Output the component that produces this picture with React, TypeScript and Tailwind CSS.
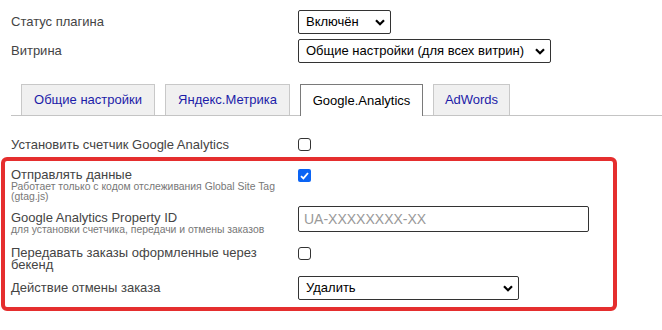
import React from "react";

const Chevron = () => (
  <svg width="10" height="7" viewBox="0 0 10 7" className="shrink-0">
    <path d="M1 1.2 L5 5.2 L9 1.2" fill="none" stroke="#000" strokeWidth="2.2" />
  </svg>
);

const Select = ({ value, w }: { value: string; w: string }) => (
  <div
    className={`flex h-[24px] items-center justify-between whitespace-nowrap rounded-[2px] border border-[#333] bg-white pl-[7px] pr-[5px] text-[13px] text-black ${w}`}
  >
    <span>{value}</span>
    <Chevron />
  </div>
);

const Checkbox = ({ checked }: { checked?: boolean }) =>
  checked ? (
    <div className="flex h-[13px] w-[13px] items-center justify-center rounded-[2px] bg-[#0b64f4]">
      <svg width="9" height="8" viewBox="0 0 9 8">
        <path d="M1 4.2 L3.4 6.4 L8 1" fill="none" stroke="#fff" strokeWidth="1.8" />
      </svg>
    </div>
  ) : (
    <div className="h-[13px] w-[13px] rounded-[3px] border border-[#333] bg-white" />
  );

const tabs = [
  { name: "Общие настройки", active: false, w: "w-[134px]" },
  { name: "Яндекс.Метрика", active: false, w: "w-[125px]" },
  { name: "Google.Analytics", active: true, w: "w-[123px]" },
  { name: "AdWords", active: false, w: "w-[77px]" },
];

export default function App() {
  return (
    <div className="h-[330px] w-[662px] bg-white pt-[10px] font-['Liberation_Sans',Arial,sans-serif] text-[13px] text-[#444]">
      <div className="flex items-center pl-[11px]">
        <div className="w-[287px]">Статус плагина</div>
        <Select value="Включён" w="w-[93px]" />
      </div>
      <div className="mt-[5px] flex items-center pl-[11px]">
        <div className="w-[287px]">Витрина</div>
        <Select value="Общие настройки (для всех витрин)" w="w-[253px]" />
      </div>

      <div className="ml-[11px] mt-[21px] flex gap-[10px] border-b border-[#c4c4c4] pl-[10px]">
        {tabs.map((t) =>
          t.active ? (
            <div
              key={t.name}
              className={`-mb-px flex h-[32px] items-center justify-center border border-b-0 border-[#7a7a7a] bg-white text-[13px] text-black ${t.w}`}
            >
              {t.name}
            </div>
          ) : (
            <div
              key={t.name}
              className={`flex h-[31px] items-center justify-center border border-b-0 border-[#c8c8c8] bg-[#f0f0f0] text-[13px] text-[#1c1ca8] ${t.w}`}
            >
              {t.name}
            </div>
          )
        )}
      </div>

      <div className="mt-[22px] flex h-[13px] items-center pl-[11px]">
        <div className="w-[287px]">Установить счетчик Google Analytics</div>
        <Checkbox />
      </div>

      <div className="ml-[1px] mt-[6px] w-[616px] rounded-[6px] border-[4px] border-[#e52e2e] pb-[7px] pl-[6px] pt-[7px]">
        <div className="flex items-start">
          <div className="w-[287px] leading-[14px]">
            <div>Отправлять данные</div>
            <div className="text-[10.4px] leading-[10px] text-[#777]">
              Работает только с кодом отслеживания Global Site Tag (gtag.js)
            </div>
          </div>
          <div className="pt-[1px]">
            <Checkbox checked />
          </div>
        </div>

        <div className="mt-[4px] flex items-start">
          <div className="w-[287px] pt-[5px] leading-[14px]">
            <div>Google Analytics Property ID</div>
            <div className="text-[10.4px] leading-[10px] text-[#777]">
              для установки счетчика, передачи и отмены заказов
            </div>
          </div>
          <div className="flex h-[26px] w-[291px] items-center rounded-[2px] border border-[#333] px-[5px] text-[14px] text-[#999]">
            UA-XXXXXXXX-XX
          </div>
        </div>

        <div className="mt-[12px] flex items-start">
          <div className="w-[287px] leading-[12px]">Передавать заказы оформленные через бекенд</div>
          <Checkbox />
        </div>

        <div className="mt-[5px] flex items-center">
          <div className="w-[287px]">Действие отмены заказа</div>
          <Select value="Удалить" w="w-[221px]" />
        </div>
      </div>
    </div>
  );
}
